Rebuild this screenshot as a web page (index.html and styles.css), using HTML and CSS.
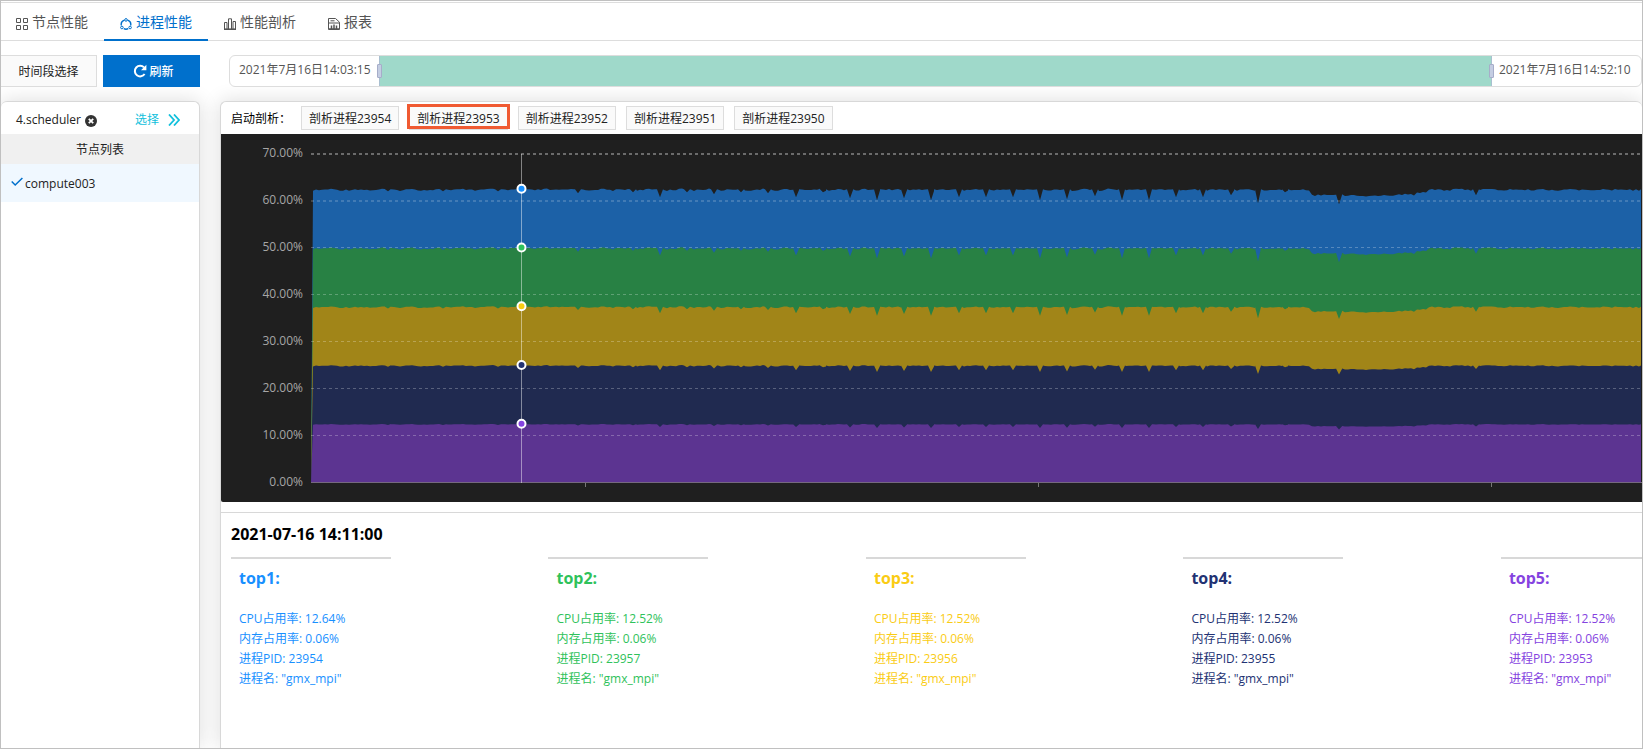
FILE: index.html
```html
<!DOCTYPE html>
<html lang="zh-CN">
<head>
<meta charset="utf-8">
<title>进程性能</title>
<link rel="stylesheet" href="styles.css">
</head>
<body>
<div class="frame">
  <nav class="tabs">
    <a class="tab" href="#nodes"><svg class="icon" viewBox="0 0 12 12"><path d="M.5.5h4v4h-4zM7.500.5h4v4h-4zM.5 7.500h4v4h-4zM7.500 7.500h4v4h-4z"/></svg>节点性能</a>
    <a class="tab active" href="#process"><svg class="icon" viewBox="0 0 12 12"><path d="M4.500 2.200A4.700 4.700 0 0 0 1.300 7.500M7.500 2.200A4.700 4.700 0 0 1 10.700 7.500M3.800 10.700a4.700 4.700 0 0 0 4.400 0" stroke-width="1.400"/><circle cx="6" cy="1.900" r="1.300"/><circle cx="1.900" cy="9.500" r="1.300"/><circle cx="10.100" cy="9.500" r="1.300"/></svg>进程性能</a>
    <a class="tab" href="#profile"><svg class="icon" viewBox="0 0 12 12"><path d="M0 11.200h12" stroke-width="1.600"/><path d="M.5 11V4.500h2.500V11M4.500 11V.8h3V11M9 11V3.500h2.500V11"/></svg>性能剖析</a>
    <a class="tab" href="#report"><svg class="icon" viewBox="0 0 12 12"><path d="M.5.5h7l4 3.700v7.300H.5zM2.500 2.800h4M1 5h10"/><path d="M3.500 7.500v3M6 6.500v4M8.500 7.500v3M1 11h10" stroke-width="1.500"/></svg>报表</a>
  </nav>

  <div class="toolbar">
    <button class="btn" type="button">时间段选择</button>
    <button class="btn primary" type="button"><svg class="refresh" viewBox="0 0 14 14"><path d="M11.600 10A5.300 5.300 0 1 1 11 3.400" fill="none" stroke="#fff" stroke-width="2"/><path d="M13.400 .8v5.400H8z" fill="#fff"/></svg>刷新</button>
    <div class="range">
      <span class="range-label">2021年7月16日14:03:15</span>
      <div class="range-fill">
        <input class="thumb" type="range" min="0" max="2935" value="0" aria-label="开始时间">
        <input class="thumb" type="range" min="0" max="2935" value="2935" aria-label="结束时间">
      </div>
      <span class="range-label end">2021年7月16日14:52:10</span>
    </div>
  </div>

  <div class="main">
    <aside class="side">
      <div class="job">
        <span>4.scheduler</span>
        <button class="clear" type="button" aria-label="清除"><svg viewBox="0 0 12 12"><circle cx="6" cy="6" r="6" fill="#333"/><path d="M3.800 3.800l4.400 4.400M8.200 3.800l-4.400 4.400" stroke="#fff" stroke-width="1.800"/></svg></button>
        <a class="pick" href="#pick">选择<svg viewBox="0 0 12 12"><path d="M1 .5 6 6l-5 5.500M6 .5 11 6l-5 5.500" fill="none" stroke="currentColor" stroke-width="1.800"/></svg></a>
      </div>
      <h2 class="side-title">节点列表</h2>
      <a class="node" href="#compute003"><svg viewBox="0 0 12 12"><path d="M.7 5.500 4.200 9l7.200-7" fill="none" stroke="#0070cc" stroke-width="1.500"/></svg>compute003</a>
    </aside>

    <section class="panel">
      <div class="launch">
        <span class="launch-label">启动剖析：</span>
        <button class="chip" type="button">剖析进程23954</button>
        <button class="chip marked" type="button">剖析进程23953</button>
        <button class="chip" type="button">剖析进程23952</button>
        <button class="chip" type="button">剖析进程23951</button>
        <button class="chip" type="button">剖析进程23950</button>
      </div>
      <div class="chart">
        <div class="axis">
          <span>70.00%</span><span>60.00%</span><span>50.00%</span><span>40.00%</span><span>30.00%</span><span>20.00%</span><span>10.00%</span><span>0.00%</span>
        </div>
        <svg class="plot" id="plot"></svg>
      </div>
      <div class="detail">
        <h3 class="stamp">2021-07-16 14:11:00</h3>
        <div class="tops">
          <article class="top c1"><h4>top1:</h4><p>CPU占用率: 12.64%</p><p>内存占用率: 0.06%</p><p>进程PID: 23954</p><p>进程名: "gmx_mpi"</p></article>
          <article class="top c2"><h4>top2:</h4><p>CPU占用率: 12.52%</p><p>内存占用率: 0.06%</p><p>进程PID: 23957</p><p>进程名: "gmx_mpi"</p></article>
          <article class="top c3"><h4>top3:</h4><p>CPU占用率: 12.52%</p><p>内存占用率: 0.06%</p><p>进程PID: 23956</p><p>进程名: "gmx_mpi"</p></article>
          <article class="top c4"><h4>top4:</h4><p>CPU占用率: 12.52%</p><p>内存占用率: 0.06%</p><p>进程PID: 23955</p><p>进程名: "gmx_mpi"</p></article>
          <article class="top c5"><h4>top5:</h4><p>CPU占用率: 12.52%</p><p>内存占用率: 0.06%</p><p>进程PID: 23953</p><p>进程名: "gmx_mpi"</p></article>
        </div>
      </div>
    </section>
  </div>
</div>
<script src="chart.js"></script>
</body>
</html>
```
FILE: styles.css
```css
* { box-sizing: border-box; }
body {
  margin: 0;
  font: 12px/20px "Open Sans", "Noto Sans CJK SC", sans-serif;
  color: #222;
  background: #fff;
}
h2, h3, h4, p { margin: 0; }
a { color: inherit; text-decoration: none; }
button { font: inherit; color: inherit; cursor: pointer; }
svg { display: block; flex: none; }

.frame {
  display: flex;
  flex-direction: column;
  min-height: 100vh;
  border: 1px solid #c0c0c0;
  overflow: hidden;
}
.tabs {
  display: flex;
  height: 39px;
  margin-top: 1px;
  margin-left: -1px;
  border-top: 1px solid #ddd;
  border-bottom: 1px solid #ddd;
  flex: none;
}
.tab {
  display: flex;
  align-items: center;
  gap: 4px;
  height: 38px;
  padding: 0 16px;
  font-size: 14px;
  color: #555;
}
.tab.active { color: #0070cc; box-shadow: inset 0 -2px #0070cc; }
.icon {
  width: 12px;
  height: 12px;
  margin-top: 3px;
  fill: none;
  stroke: currentColor;
  stroke-width: 1;
}
.toolbar {
  display: flex;
  gap: 6px;
  height: 32px;
  margin-top: 14px;
  flex: none;
  position: relative;
  z-index: 1;
}
.btn {
  display: flex;
  align-items: center;
  justify-content: center;
  gap: 2px;
  width: 97px;
  padding: 2px 0 0;
  border: 1px solid #ddd;
  background: #fafafa;
}
.toolbar .btn:first-child { border-left: 0; width: 96px; }
.btn.primary {
  padding-left: 4px;
  background: #0070cc;
  border-color: #0070cc;
  color: #fff;
  font-weight: 500;
}
.refresh { width: 14px; height: 14px; margin-bottom: 2px; }
.range {
  display: flex;
  flex: 1;
  margin-left: 23px;
  border: 1px solid #ddd;
  border-radius: 6px;
  background: #fff;
}
.range-label {
  width: 149px;
  padding: 4px 0 0 9px;
  color: #555;
  white-space: nowrap;
}
.range-label.end { padding-left: 7px; }
.range-fill {
  position: relative;
  flex: 1;
  background: #9fd9ca;
  border: solid #a9bfd0;
  border-width: 0 1px;
}
.thumb {
  position: absolute;
  inset: 0 -3px;
  width: calc(100% + 6px);
  height: 30px;
  margin: 0;
  appearance: none;
  background: none;
  pointer-events: none;
}
.thumb::-webkit-slider-thumb {
  appearance: none;
  pointer-events: auto;
  width: 5px;
  height: 14px;
  border: 1px solid #a6adc9;
  border-radius: 1px;
  background: #c4cde2;
}
.main {
  display: flex;
  gap: 20px;
  flex: 1;
  margin-top: 14px;
}
.side, .panel {
  background: #fff;
  border: 1px solid #d8d8d8;
  border-radius: 6px 6px 0 0;
  border-bottom: 0;
  box-shadow: 0 0 20px rgba(0, 0, 0, .14);
}
.side { flex: none; width: 199px; border-left: 0; }
.job {
  display: flex;
  align-items: center;
  height: 32px;
  padding: 3px 19px 0 15px;
}
.clear { width: 12px; padding: 0; margin: 2px 0 0 4px; border: 0; background: none; }
.pick {
  display: flex;
  align-items: center;
  gap: 9px;
  margin-left: auto;
  color: #10c0dc;
}
.pick svg { width: 12px; height: 12px; }
.clear svg { width: 12px; height: 12px; }
.side-title {
  height: 30px;
  font-size: 12px;
  font-weight: 400;
  line-height: 32px;
  text-align: center;
  background: #f0f0f0;
}
.node {
  display: flex;
  align-items: center;
  gap: 2px;
  height: 38px;
  padding: 1px 0 0 10px;
  background: #f0f8ff;
}
.node svg { width: 12px; height: 12px; margin-bottom: 4px; }
.panel { flex: 1; min-width: 0; border-right: 0; }
.launch {
  display: flex;
  align-items: center;
  gap: 10px;
  height: 32px;
  padding-left: 10px;
  color: #000;
}
.launch-label { width: 60px; padding-top: 2px; white-space: nowrap; }
.chip {
  position: relative;
  height: 24px;
  padding: 2px 7px 0;
  border: 1px solid #ddd;
  background: #fafafa;
  color: #222;
  line-height: 20px;
  white-space: nowrap;
}
.chip.marked::after {
  content: "";
  position: absolute;
  inset: -3px -3px 0;
  border: 3px solid #f05a32;
}
.chart {
  display: flex;
  gap: 8px;
  height: 368px;
  padding-top: 10px;
  background: #1f1f1f;
  border-radius: 0 0 0 2px;
}
.axis {
  width: 82px;
  flex: none;
  text-align: right;
  color: #a6a6a6;
}
.axis span { display: block; height: 47px; line-height: 18px; }
.axis span:last-child { height: 18px; }
.plot { flex: 1; min-width: 0; height: 350px; }
.detail {
  margin-top: 10px;
  padding: 10px 0 0 10px;
  border-top: 1px solid #d8d8d8;
  overflow: hidden;
}
.stamp { font-size: 16px; line-height: 22px; color: #000; }
.tops {
  display: grid;
  grid-template-columns: repeat(5, 22.5%);
  margin-top: 12px;
}
.top { width: 160px; padding: 8px 8px 0; border-top: 2px solid #d8d8d8; }
.top h4 { margin-bottom: 20px; font-size: 16px; line-height: 22px; }
.c1 { color: #1890ff; }
.c2 { color: #2fc25b; }
.c3 { color: #facc14; }
.c4 { color: #223273; }
.c5 { color: #8543e0; }
```
FILE: chart.js
```js
const svg = document.getElementById('plot');
const SPAN = 1331;   // width of the time axis in data units
const BASE = 339;    // y of 0%
const STEP = 47;     // height of 10%

// [position, drop] of the short load dips
const DIPS = [
  [77, 2], [132, 2], [187, 2], [267, 4], [322, 3], [349, 8], [376, 3], [403, 5],
  [430, 3], [457, 4], [485, 8], [512, 3], [539, 9], [566, 11], [593, 9], [620, 11],
  [648, 8], [675, 8], [702, 8], [729, 11], [756, 10], [784, 7], [811, 11], [838, 11],
  [865, 8], [892, 8], [920, 6], [947, 14], [974, 3], [1028, 10], [1165, 6]
];
const LAYERS = [
  { level: 62.5, depth: 1, fill: '#1c61a7', dot: '#1890ff' },
  { level: 50, depth: 0.95, fill: '#288144', dot: '#2fc25b' },
  { level: 37.500, depth: 0.82, fill: '#a18518', dot: '#facc14' },
  { level: 25, depth: 0.6, fill: '#202a50', dot: '#223273' },
  { level: 12.5, depth: 0.35, fill: '#5c3491', dot: '#8543e0' }
];

function sag(x) {
  if (x < 1000 || x > 1116) return 0;
  if (x > 1104) return 2;
  return x > 1033 && x < 1080 ? 6 : 5;
}
function ripple(i) {
  const v = Math.sin(i * 12.9898) * 43758.5453;
  return (v - Math.floor(v) - 0.5) * 1.7 + Math.sin(i * 0.7) * 0.4 + 0.5;
}
function samples() {
  const pts = [];
  for (let i = 1, x = 2; x <= SPAN - 2; i++, x += 3) {
    if (!DIPS.some(d => Math.abs(d[0] - x) < 3)) pts.push([x, sag(x) + ripple(i)]);
  }
  DIPS.forEach(([x, d]) => pts.push([x - 3, sag(x)], [x, d + sag(x)], [x + 3, sag(x)]));
  pts.push([SPAN - 1, 0]);
  return pts.sort((a, b) => a[0] - b[0]);
}
const data = samples();

function draw() {
  const w = svg.clientWidth;
  const k = w / SPAN;
  let out = '';
  LAYERS.forEach(l => {
    const y = BASE - l.level * STEP / 10;
    const line = data.map(([x, d]) => (x * k).toFixed(1) + ' ' + (y + d * l.depth).toFixed(1)).join('L');
    out += `<path d="M0 ${BASE}L${line}L${(SPAN - 1) * k} ${BASE}Z" fill="${l.fill}"/>`;
  });
  for (let n = 1; n <= 7; n++) {
    const thick = n > 5 ? 2 : 1;
    const y = BASE - n * STEP + (thick === 2 ? 0 : -0.5);
    const alpha = n === 7 ? 0.34 : n === 6 ? 0.17 : 0.26;
    out += `<path d="M0 ${y}H${w}" stroke="#fff" stroke-opacity="${alpha}" stroke-width="${thick}" stroke-dasharray="3 3"/>`;
  }
  out += `<path d="M0 ${BASE - 0.5}H${w}" stroke="#75687f"/>`;
  [274.5, 727.5, 1180.5].forEach(x => {
    out += `<path d="M${x * k} ${BASE}v4" stroke="#777"/>`;
  });
  const cx = 210.5 * k;
  out += `<path d="M${cx} 10V${BASE}" stroke="#fff" stroke-opacity=".45"/>`;
  LAYERS.forEach(l => {
    const cy = BASE - l.level * STEP / 10 - 0.5;
    out += `<circle cx="${cx}" cy="${cy}" r="4" fill="${l.dot}" stroke="#fff" stroke-width="2"/>`;
  });
  svg.innerHTML = out;
}
draw();
window.addEventListener('resize', draw);
```
